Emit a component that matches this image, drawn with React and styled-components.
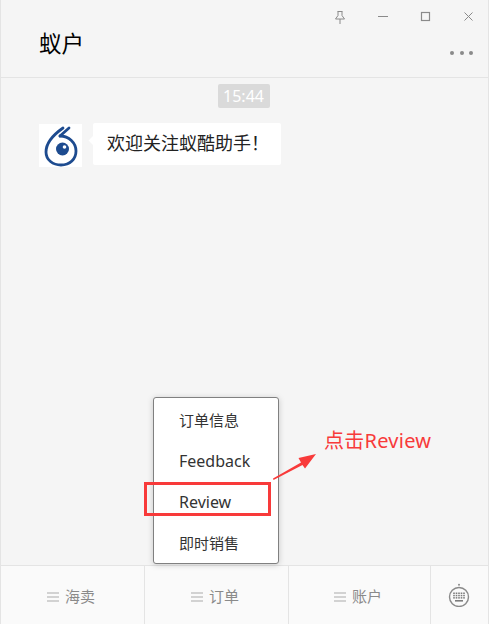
import React from "react";
import styled, { createGlobalStyle } from "styled-components";

const Global = createGlobalStyle`
  html, body { margin: 0; padding: 0; background: #fff; }
  * { box-sizing: border-box; }
`;
const FONT = `"Noto Sans", "Noto Sans CJK SC", sans-serif`;

const Window = styled.div`
  position: relative;
  width: 489px;
  height: 624px;
  display: flex;
  flex-direction: column;
  background: #f5f5f5;
  border-left: 1px solid #e4e4e4;
  border-right: 1px solid #e4e4e4;
  font-family: ${FONT};
  overflow: hidden;
`;
const Header = styled.header`
  height: 78px;
  flex: none;
  display: flex;
  justify-content: space-between;
  border-bottom: 1px solid #e4e4e4;
  padding: 0 15px 0 38px;
`;
const Title = styled.h1`
  margin: 29px 0 0;
  font-size: 22.5px;
  line-height: 30px;
  font-weight: 400;
  color: #000;
`;
const HeaderRight = styled.div`
  display: flex;
  flex-direction: column;
  align-items: flex-end;
  gap: 26px;
  padding-top: 9px;
`;
const WinButtons = styled.div`
  display: flex;
  gap: 27px;
  color: #8a8a8a;
  margin-right: -4px;
`;
const Dots = styled.div`
  display: flex;
  gap: 5.5px;
`;
const Dot = styled.span`
  width: 4px;
  height: 4px;
  border-radius: 50%;
  background: #8a8a8a;
`;
const Chat = styled.main`
  flex: 1;
  display: flex;
  flex-direction: column;
  align-items: flex-start;
  padding: 6px 0 0 38px;
`;
const Time = styled.div`
  align-self: center;
  margin-left: -40px;
  width: 52px;
  height: 24px;
  background: #dadada;
  border-radius: 2px;
  color: #fff;
  font-size: 16px;
  line-height: 24px;
  text-align: center;
`;
const Message = styled.div`
  display: flex;
  align-items: flex-start;
  gap: 11px;
  margin-top: 15px;
`;
const Avatar = styled.div`
  width: 43px;
  height: 43px;
  margin-top: 1px;
  background: #fff;
`;
const Bubble = styled.div`
  position: relative;
  width: 188px;
  height: 42px;
  padding: 0 14px;
  background: #fff;
  border-radius: 2px;
  color: #222;
  font-size: 18px;
  line-height: 41px;
  white-space: nowrap;
  &::before {
    content: "";
    position: absolute;
    left: -3px;
    top: 14px;
    width: 7px;
    height: 7px;
    background: #fff;
    transform: rotate(45deg);
  }
`;
const Footer = styled.footer`
  flex: none;
  height: 59px;
  display: flex;
  background: #fafafa;
  border-top: 1px solid #e4e4e4;
`;
const Tab = styled.div`
  width: ${(p) => p.$w}px;
  display: flex;
  align-items: center;
  justify-content: center;
  gap: 6px;
  padding-right: ${(p) => (p.$last ? 1 : 3)}px;
  color: #8a8a8a;
  font-size: 15px;
  border-right: ${(p) => (p.$last ? "none" : "1px solid #e4e4e4")};
`;
const Burger = styled.span`
  position: relative;
  width: 12px;
  height: 10px;
  margin-top: 4px;
  border-top: 2px solid #d2d2d2;
  border-bottom: 2px solid #d2d2d2;
  &::after {
    content: "";
    position: absolute;
    left: 0;
    right: 0;
    top: 2px;
    height: 2px;
    background: #d2d2d2;
  }
`;
const Menu = styled.nav`
  position: absolute;
  left: 152px;
  top: 397px;
  width: 126px;
  height: 167px;
  padding: 2px 0 0 25px;
  background: #fff;
  border: 1px solid #808080;
  border-radius: 3px;
  box-shadow: 0 1px 6px rgba(0, 0, 0, 0.18);
`;
const MenuItem = styled.div`
  height: 41px;
  line-height: 41px;
  font-size: ${(p) => (p.$latin ? 16 : 15)}px;
  color: #333;
`;
const Highlight = styled.div`
  position: absolute;
  left: 143px;
  top: 482px;
  width: 127px;
  height: 34px;
  border: 3px solid #f83a3a;
`;
const Arrow = styled.svg`
  position: absolute;
  left: 269px;
  top: 450px;
`;
const Note = styled.div`
  position: absolute;
  left: 323px;
  top: 426px;
  font-size: 20px;
  letter-spacing: 0.25px;
  line-height: 30px;
  color: #f83a3a;
  white-space: nowrap;
`;

const Logo = () => (
  <svg width="43" height="43" viewBox="0 0 43 43" fill="none" stroke="#1d4b8f" strokeWidth="2.8" strokeLinecap="round">
    <path d="M24 4C14 11 7 19 7 28c0 8 7 13 15 13 9 0 15-6 15-14 0-8-7-15-16-15" />
    <path d="M30 4l-9 8" />
    <circle cx="23.5" cy="25" r="6.5" fill="#1d4b8f" stroke="none" />
    <circle cx="25.5" cy="23" r="1.8" fill="#fff" stroke="none" />
  </svg>
);

const Pin = () => (
  <svg width="16" height="16" viewBox="0 0 16 16" fill="none" stroke="currentColor" strokeWidth="1">
    <path d="M5.5 2.5h5M6 2.5v4L3.5 10h9L10 6.5v-4M8 10v5" />
  </svg>
);
const Minimize = () => (
  <svg width="16" height="16" viewBox="0 0 16 16" stroke="currentColor" strokeWidth="1"><path d="M3 7.5h10" /></svg>
);
const Maximize = () => (
  <svg width="16" height="16" viewBox="0 0 16 16" fill="none" stroke="currentColor" strokeWidth="1.2"><rect x="3.5" y="3.5" width="8" height="8" /></svg>
);
const Close = () => (
  <svg width="16" height="16" viewBox="0 0 16 16" stroke="currentColor" strokeWidth="1"><path d="M3.5 3.5l8 8M11.5 3.5l-8 8" /></svg>
);
const Keyboard = () => (
  <svg width="22" height="24" viewBox="0 0 22 24" fill="none">
    <circle cx="11" cy="14" r="9.5" stroke="#8a8a8a" strokeWidth="1.4" />
    <circle cx="11" cy="1.8" r="1" fill="#8a8a8a" />
    {[0, 1, 2].flatMap((r) =>
      [0, 1, 2, 3, 4].map((c) => (
        <rect key={`${r}-${c}`} x={5.2 + c * 2.5} y={9.5 + r * 2.3} width="1.6" height="1.5" fill="#7c7c7c" />
      ))
    )}
    <rect x="7" y="17" width="8" height="1.6" fill="#7c7c7c" />
  </svg>
);

export default function App() {
  return (
    <>
      <Global />
      <Window>
        <Header>
          <Title>蚁户</Title>
          <HeaderRight>
            <WinButtons>
              <Pin />
              <Minimize />
              <Maximize />
              <Close />
            </WinButtons>
            <Dots>
              <Dot />
              <Dot />
              <Dot />
            </Dots>
          </HeaderRight>
        </Header>
        <Chat>
          <Time>15:44</Time>
          <Message>
            <Avatar>
              <Logo />
            </Avatar>
            <Bubble>欢迎关注蚁酷助手！</Bubble>
          </Message>
        </Chat>
        <Footer>
          <Tab $w={144}><Burger />海卖</Tab>
          <Tab $w={144}><Burger />订单</Tab>
          <Tab $w={142}><Burger />账户</Tab>
          <Tab $w={57} $last><Keyboard /></Tab>
        </Footer>
        <Menu>
          <MenuItem>订单信息</MenuItem>
          <MenuItem $latin>Feedback</MenuItem>
          <MenuItem $latin>Review</MenuItem>
          <MenuItem>即时销售</MenuItem>
        </Menu>
        <Highlight />
        <Arrow width="50" height="34" viewBox="0 0 50 34">
          <path d="M3 28.5L31 12.5 28.5 8 46 4 35 18.5 32.5 15 3.5 30z" fill="#f83a3a" />
        </Arrow>
        <Note>点击Review</Note>
      </Window>
    </>
  );
}
